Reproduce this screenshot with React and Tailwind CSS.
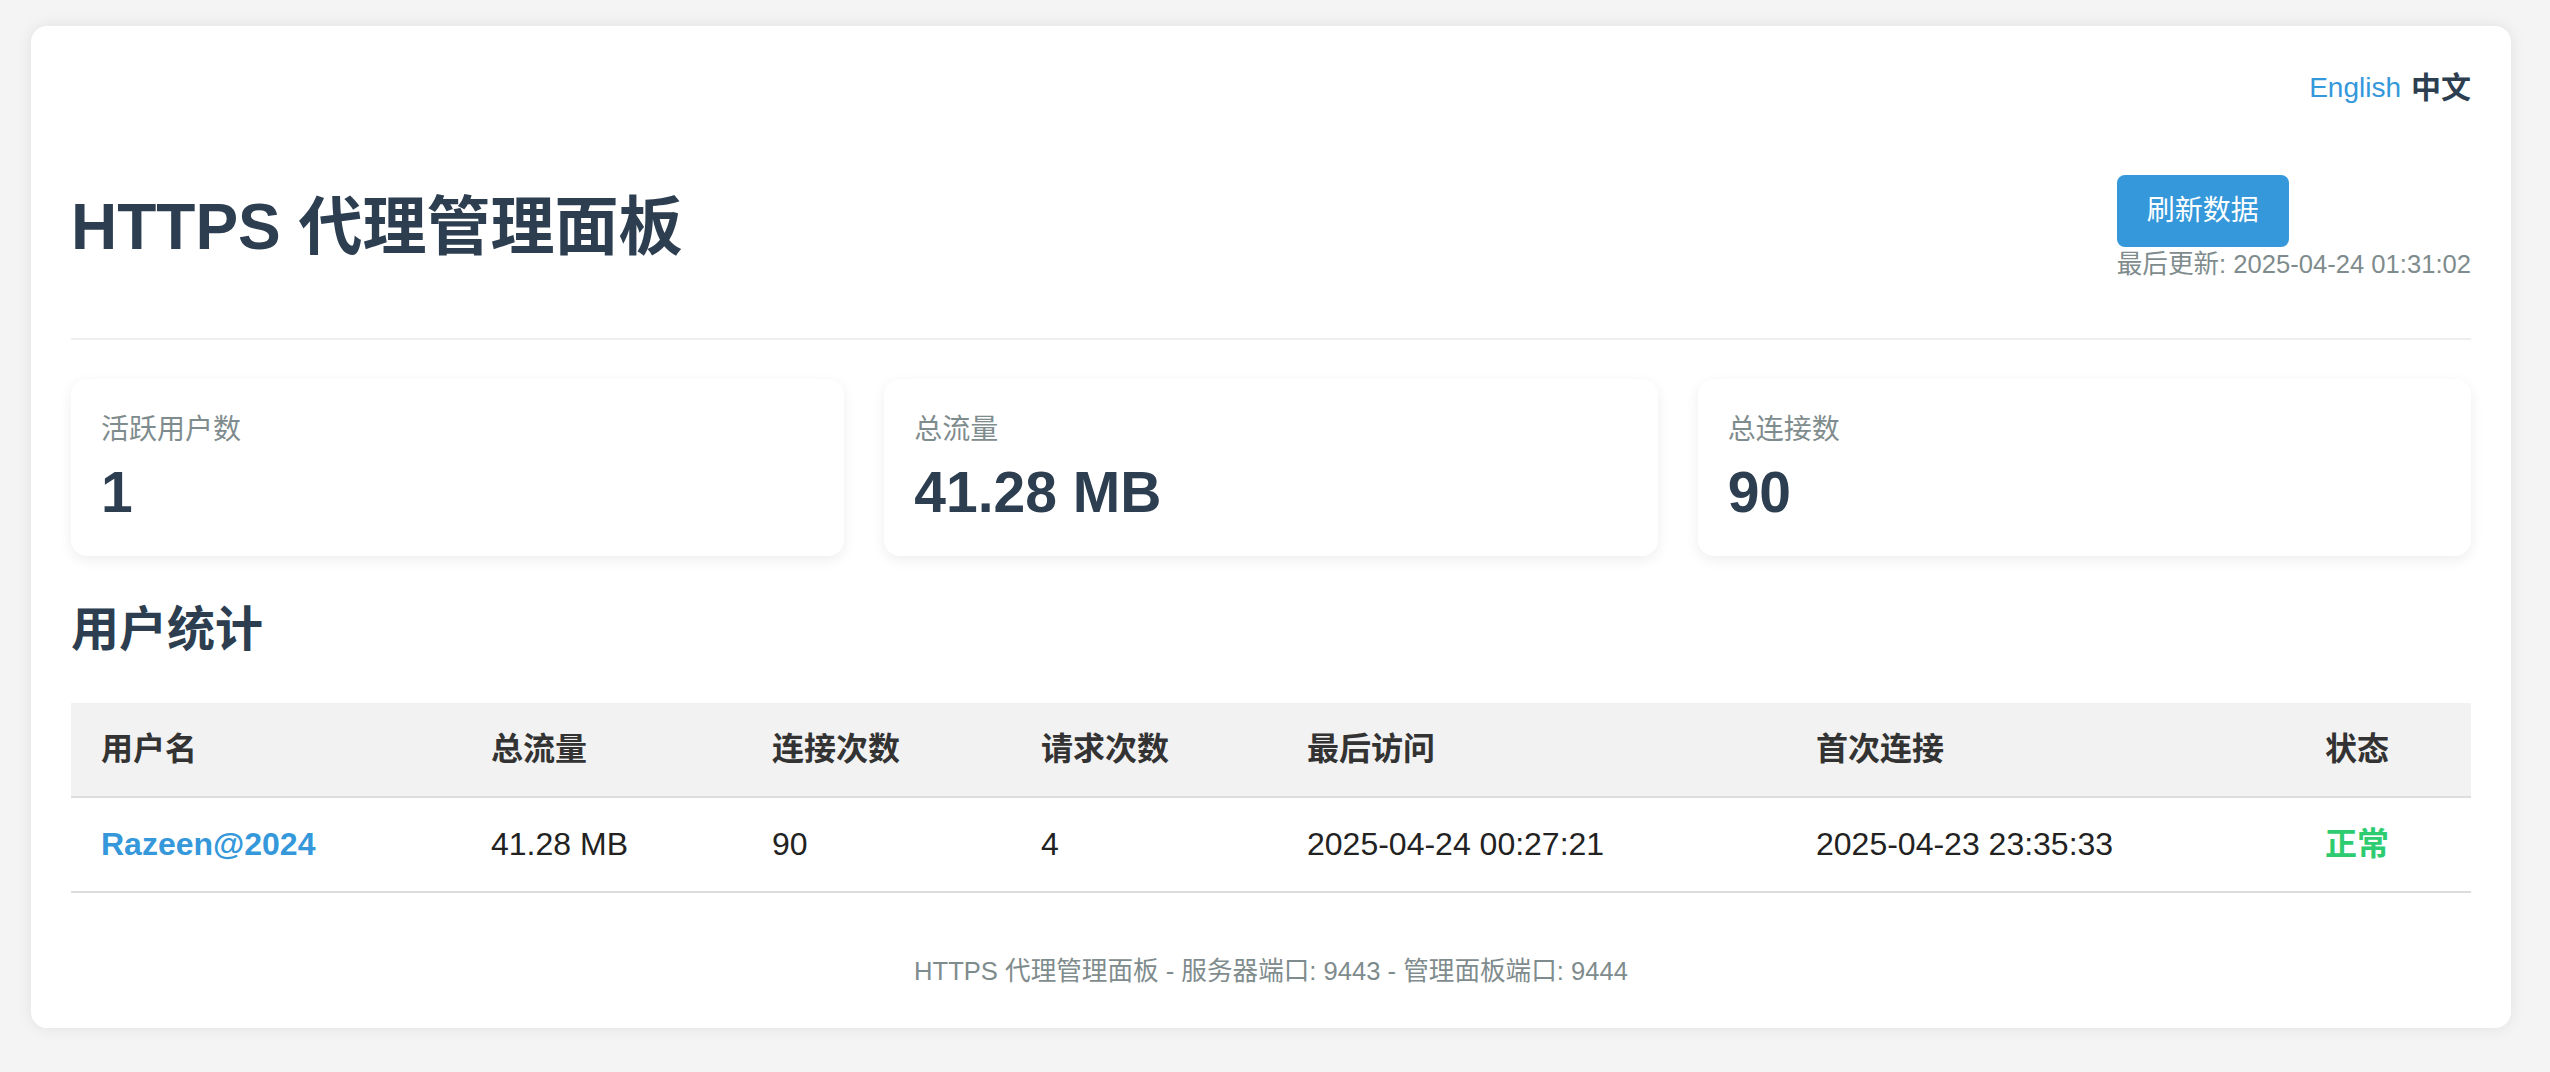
import React from "react";

const font = {
  fontFamily: '"Liberation Sans", "Noto Sans CJK SC", sans-serif',
};

const stats = [
  { label: "活跃用户数", value: "1" },
  { label: "总流量", value: "41.28 MB" },
  { label: "总连接数", value: "90" },
];

const columns = [
  { title: "用户名", width: "w-[390px]" },
  { title: "总流量", width: "w-[281px]" },
  { title: "连接次数", width: "w-[269px]" },
  { title: "请求次数", width: "w-[266px]" },
  { title: "最后访问", width: "w-[509px]" },
  { title: "首次连接", width: "w-[509px]" },
  { title: "状态", width: "w-[176px]" },
];

const users = [
  {
    name: "Razeen@2024",
    traffic: "41.28 MB",
    connections: "90",
    requests: "4",
    lastSeen: "2025-04-24 00:27:21",
    firstSeen: "2025-04-23 23:35:33",
    status: "正常",
  },
];

function StatCard({ label, value }) {
  return (
    <div className="h-[177px] rounded-[16px] bg-white px-[30px] pt-[30px] shadow-[0_4px_14px_rgba(0,0,0,0.07)]">
      <p className="text-[28px] leading-[42px] text-[#7f8c8d]">{label}</p>
      <p className="mt-[7px] text-[57px] font-bold leading-[68px] text-[#2c3e50]">
        {value}
      </p>
    </div>
  );
}

export default function App() {
  return (
    <div style={font} className="min-h-[1072px] bg-[#f4f4f4] pl-[31px] pr-[39px] pt-[26px]">
      <div className="h-[1002px] rounded-[16px] bg-white px-[40px] pt-[40px] shadow-[0_0_16px_rgba(0,0,0,0.08)]">
        <div className="flex h-[44px] items-center justify-end gap-[10px] leading-[44px]">
          <span className="text-[28px] text-[#3498db]">English</span>
          <span className="text-[30px] font-bold text-[#2c3e50]">中文</span>
        </div>

        <div className="mt-[65px] flex items-center justify-between">
          <h1 className="text-[64px] font-bold leading-[74px] text-[#2c3e50]">
            HTTPS 代理管理面板
          </h1>
          <div className="flex flex-col items-start">
            <button className="h-[72px] rounded-[8px] bg-[#3498db] px-[30px] text-[28px] leading-[32px] text-white">
              刷新数据
            </button>
            <p className="mt-[2px] text-[25.6px] leading-[30px] text-[#7f8c8d]">
              最后更新: 2025-04-24 01:31:02
            </p>
          </div>
        </div>

        <div className="mt-[59px] h-[2px] bg-[#eeeeee]" />

        <div className="mt-[39px] grid grid-cols-3 gap-[40px]">
          {stats.map((s) => (
            <StatCard key={s.label} label={s.label} value={s.value} />
          ))}
        </div>

        <h2 className="mt-[46px] text-[48px] font-bold leading-[56px] text-[#2c3e50]">
          用户统计
        </h2>

        <table className="mt-[45px] w-full border-collapse text-left text-[32px]">
          <thead>
            <tr className="bg-[#f2f2f2]">
              {columns.map((c) => (
                <th
                  key={c.title}
                  className={`${c.width} border-b-2 border-[#dddddd] px-[30px] py-[28px] font-bold leading-[37px] text-[#333333]`}
                >
                  {c.title}
                </th>
              ))}
            </tr>
          </thead>
          <tbody>
            {users.map((u) => (
              <tr key={u.name}>
                <td className="border-b-2 border-[#dddddd] px-[30px] py-[28px] font-bold leading-[37px] text-[#3498db]">
                  {u.name}
                </td>
                <td className="border-b-2 border-[#dddddd] px-[30px] py-[28px] leading-[37px] text-[#222222]">
                  {u.traffic}
                </td>
                <td className="border-b-2 border-[#dddddd] px-[30px] py-[28px] leading-[37px] text-[#222222]">
                  {u.connections}
                </td>
                <td className="border-b-2 border-[#dddddd] px-[30px] py-[28px] leading-[37px] text-[#222222]">
                  {u.requests}
                </td>
                <td className="border-b-2 border-[#dddddd] px-[30px] py-[28px] leading-[37px] text-[#222222]">
                  {u.lastSeen}
                </td>
                <td className="border-b-2 border-[#dddddd] px-[30px] py-[28px] leading-[37px] text-[#222222]">
                  {u.firstSeen}
                </td>
                <td className="border-b-2 border-[#dddddd] px-[30px] py-[28px] font-bold leading-[37px] text-[#2ecc71]">
                  {u.status}
                </td>
              </tr>
            ))}
          </tbody>
        </table>

        <p className="mt-[64px] text-center text-[25.6px] leading-[28px] text-[#7f8c8d]">
          HTTPS 代理管理面板 - 服务器端口: 9443 - 管理面板端口: 9444
        </p>
      </div>
    </div>
  );
}
